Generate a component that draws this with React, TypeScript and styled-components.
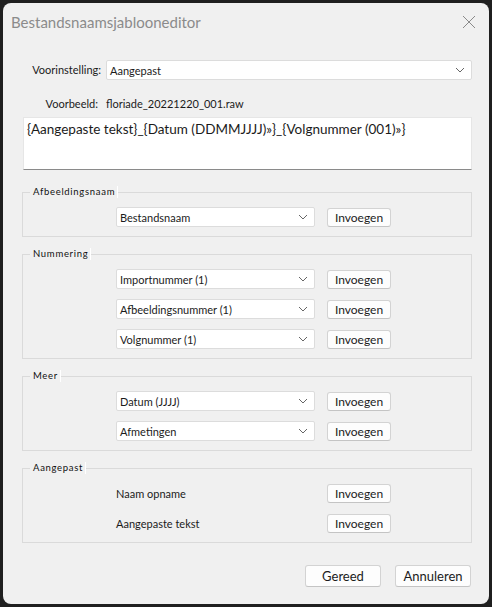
import React from "react";
import styled, { createGlobalStyle } from "styled-components";

const GlobalStyle = createGlobalStyle`
	html, body {
		margin: 0;
		padding: 0;
		background: #1f1f1f;
	}
	body {
		font-family: Lato, "Noto Sans", sans-serif;
		font-size: 11px;
		color: #1b1b1b;
	}
`;

const Window = styled.div`
	margin: 3px;
	width: 486px;
	height: 601px;
	box-sizing: border-box;
	background: #f0f0f0;
	border-radius: 8px;
	overflow: hidden;
	display: flex;
	flex-direction: column;
`;

const TitleBar = styled.div`
	height: 37px;
	display: flex;
	align-items: center;
	justify-content: space-between;
	padding: 0 12px 0 8px;
`;

const Title = styled.span`
	font-size: 15px;
	color: #8b8b8b;
`;

const CloseButton = styled.button`
	border: none;
	background: transparent;
	padding: 0;
	width: 16px;
	height: 16px;
	display: flex;
	align-items: center;
	justify-content: center;
	cursor: pointer;
`;

const Body = styled.div`
	flex: 1;
	display: flex;
	flex-direction: column;
	padding: 20px 17px 0 19px;
`;

const FormGrid = styled.div`
	display: grid;
	grid-template-columns: 79px 1fr;
	column-gap: 5px;
	row-gap: 16px;
	align-items: center;
`;

const Label = styled.span<{ $inset?: number }>`
	text-align: right;
	white-space: nowrap;
	line-height: 16px;
	padding-right: ${(p) => p.$inset || 0}px;
`;

const Value = styled.span`
	white-space: nowrap;
	line-height: 16px;
`;

const SelectBox = styled.div<{ $width?: number }>`
	box-sizing: border-box;
	height: 20px;
	width: ${(p) => (p.$width ? `${p.$width}px` : "100%")};
	background: #ffffff;
	border: 1px solid #dcdcdc;
	border-radius: 2px;
	display: flex;
	align-items: center;
	justify-content: space-between;
	padding: 0 6px 0 3px;
	font-size: 11px;
	white-space: nowrap;
`;

const Chevron = () => (
	<svg width="10" height="6" viewBox="0 0 10 6">
		<path d="M1 1 L5 5 L9 1" fill="none" stroke="#666" strokeWidth="1" />
	</svg>
);

const Select = ({ value, width }: { value: string; width?: number }) => (
	<SelectBox $width={width}>
		<span>{value}</span>
		<Chevron />
	</SelectBox>
);

const Template = styled.div`
	margin-top: 5px;
	margin-left: 1px;
	height: 53px;
	flex-shrink: 0;
	box-sizing: border-box;
	background: #ffffff;
	border: 1px solid #e6e6e6;
	border-bottom: 1px solid #8a8a8a;
	padding: 2px 3px;
	font-size: 13.5px;
	line-height: 18px;
	white-space: nowrap;
`;

const Groups = styled.div`
	margin-top: 22px;
	display: flex;
	flex-direction: column;
	gap: 17px;
`;

const Group = styled.section`
	position: relative;
	border: 1px solid #dadada;
	padding: 14px 0 9px;
	display: flex;
	flex-direction: column;
	gap: 10px;
`;

/* sits over the group's top border, like a groupbox caption */
const Legend = styled.span`
	position: absolute;
	top: -7px;
	left: 7px;
	font-size: 9.5px;
	letter-spacing: 0.7px;
	line-height: 12px;
	padding: 0 2px 0 3px;
	background: #f0f0f0;
	border-right: 1px solid #ffffff;
	color: #111;
`;

const Row = styled.div`
	display: flex;
	align-items: center;
	height: 20px;
	padding-left: 93px;
`;

const RowText = styled.span`
	width: 199px;
	font-size: 11px;
`;

const InsertButton = styled.button`
	margin-left: 12px;
	box-sizing: border-box;
	width: 64px;
	height: 19px;
	margin-top: 1px;
	background: #fdfdfd;
	border: 1px solid #d3d3d3;
	border-bottom-color: #c4c4c4;
	border-radius: 3px;
	font-family: inherit;
	font-size: 12px;
	color: #1b1b1b;
	padding: 0;
`;

const Footer = styled.div`
	margin-top: 22px;
	display: flex;
	justify-content: flex-end;
	gap: 14px;
	padding-right: 1px;
`;

const DialogButton = styled.button`
	box-sizing: border-box;
	width: 76px;
	height: 22px;
	background: #fdfdfd;
	border: 1px solid #d3d3d3;
	border-bottom-color: #c4c4c4;
	border-radius: 3px;
	font-family: inherit;
	font-size: 13px;
	color: #1b1b1b;
	padding: 0;
`;

type Item = { label: string; select?: boolean };

const groups: { title: string; items: Item[] }[] = [
	{ title: "Afbeeldingsnaam", items: [{ label: "Bestandsnaam", select: true }] },
	{
		title: "Nummering",
		items: [
			{ label: "Importnummer (1)", select: true },
			{ label: "Afbeeldingsnummer (1)", select: true },
			{ label: "Volgnummer (1)", select: true },
		],
	},
	{
		title: "Meer",
		items: [
			{ label: "Datum (JJJJ)", select: true },
			{ label: "Afmetingen", select: true },
		],
	},
	{
		title: "Aangepast",
		items: [{ label: "Naam opname" }, { label: "Aangepaste tekst" }],
	},
];

export default function App() {
	return (
		<>
			<GlobalStyle />
			<Window>
				<TitleBar>
					<Title>Bestandsnaamsjablooneditor</Title>
					<CloseButton aria-label="Sluiten">
						<svg width="14" height="14" viewBox="0 0 14 14">
							<path d="M1 1 L13 13 M13 1 L1 13" stroke="#8a8a8a" strokeWidth="1" fill="none" />
						</svg>
					</CloseButton>
				</TitleBar>
				<Body>
					<FormGrid>
						<Label>Voorinstelling:</Label>
						<Select value="Aangepast" />
						<Label $inset={3}>Voorbeeld:</Label>
						<Value>floriade_20221220_001.raw</Value>
					</FormGrid>
					<Template>{"{Aangepaste tekst}_{Datum (DDMMJJJJ)»}_{Volgnummer (001)»}"}</Template>
					<Groups>
						{groups.map((g) => (
							<Group key={g.title}>
								<Legend>{g.title}</Legend>
								{g.items.map((it) => (
									<Row key={it.label}>
										{it.select ? (
											<Select value={it.label} width={199} />
										) : (
											<RowText>{it.label}</RowText>
										)}
										<InsertButton>Invoegen</InsertButton>
									</Row>
								))}
							</Group>
						))}
					</Groups>
					<Footer>
						<DialogButton>Gereed</DialogButton>
						<DialogButton>Annuleren</DialogButton>
					</Footer>
				</Body>
			</Window>
		</>
	);
}
